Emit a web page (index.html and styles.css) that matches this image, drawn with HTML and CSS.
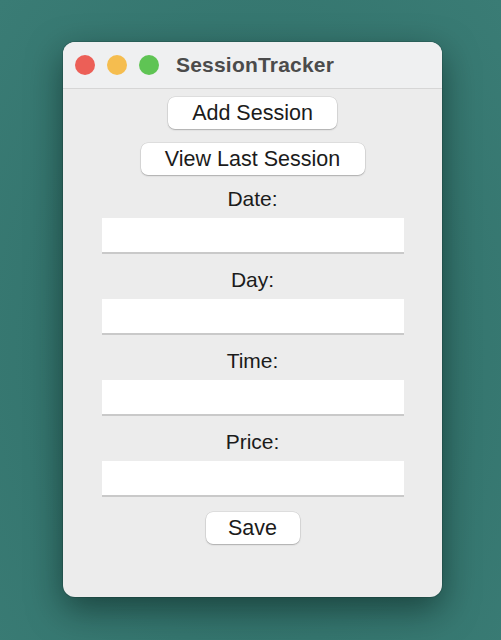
FILE: index.html
```html
<!DOCTYPE html>
<html>
<head>
<meta charset="utf-8">
<link rel="stylesheet" href="styles.css">
</head>
<body>
<div class="window">
  <div class="titlebar">
    <div class="lights">
      <span class="light red"></span>
      <span class="light yellow"></span>
      <span class="light green"></span>
    </div>
    <div class="title">SessionTracker</div>
  </div>
  <div class="content">
    <button class="btn btn-add">Add Session</button>
    <button class="btn btn-view">View Last Session</button>
    <div class="field first">
      <label class="label">Date:</label>
      <div class="input"></div>
    </div>
    <div class="field">
      <label class="label">Day:</label>
      <div class="input"></div>
    </div>
    <div class="field">
      <label class="label">Time:</label>
      <div class="input"></div>
    </div>
    <div class="field">
      <label class="label">Price:</label>
      <div class="input"></div>
    </div>
    <button class="btn btn-save">Save</button>
  </div>
</div>
</body>
</html>
```
FILE: styles.css
```css
html, body {
  margin: 0;
  padding: 0;
}
body {
  width: 501px;
  height: 640px;
  background: radial-gradient(ellipse at 50% 55%, #2f6a63 0%, #35766f 60%, #3a7c75 100%);
  font-family: "Liberation Sans", Arial, sans-serif;
  padding: 42px 0 0 63px;
  box-sizing: border-box;
  overflow: hidden;
}
.window {
  width: 379px;
  height: 555px;
  background: #ececec;
  border-radius: 12px;
  box-shadow: 0 12px 34px rgba(0, 20, 15, 0.5), 0 0 0 1px rgba(0, 0, 0, 0.12);
  overflow: hidden;
  display: flex;
  flex-direction: column;
}
.titlebar {
  height: 46px;
  background: #eff0f1;
  border-bottom: 1px solid #d6d6d6;
  display: flex;
  align-items: center;
  padding-left: 12px;
  flex-shrink: 0;
}
.lights {
  display: flex;
  gap: 12px;
}
.light {
  width: 20px;
  height: 20px;
  border-radius: 50%;
  display: block;
}
.red { background: #ec5f57; }
.yellow { background: #f5bd4f; }
.green { background: #5fc454; }
.title {
  margin-left: 17px;
  font-size: 21px;
  font-weight: bold;
  color: #4b4b4b;
  letter-spacing: 0.2px;
}
.content {
  display: flex;
  flex-direction: column;
  align-items: center;
  padding-top: 8px;
}
.btn {
  border: none;
  background: #ffffff;
  border-radius: 7px;
  box-shadow: 0 0 0 0.5px rgba(0, 0, 0, 0.12), 0 1px 1.5px rgba(0, 0, 0, 0.22);
  font-family: "Liberation Sans", Arial, sans-serif;
  font-size: 21.5px;
  color: #1b1b1b;
  height: 32px;
  padding: 0;
  margin: 0;
  display: flex;
  align-items: center;
  justify-content: center;
}
.btn-add { width: 169px; }
.btn-view { width: 224px; margin-top: 14px; }
.btn-save { width: 94px; margin-top: 15px; }
.field {
  display: flex;
  flex-direction: column;
  align-items: center;
  margin-top: 14px;
}
.field.first { margin-top: 12px; }
.label {
  font-size: 21px;
  line-height: 24px;
  height: 24px;
  color: #1b1b1b;
}
.input {
  margin-top: 7px;
  width: 302px;
  height: 34px;
  background: #ffffff;
  border-bottom: 2px solid #c9c9c9;
  box-sizing: content-box;
}
```
